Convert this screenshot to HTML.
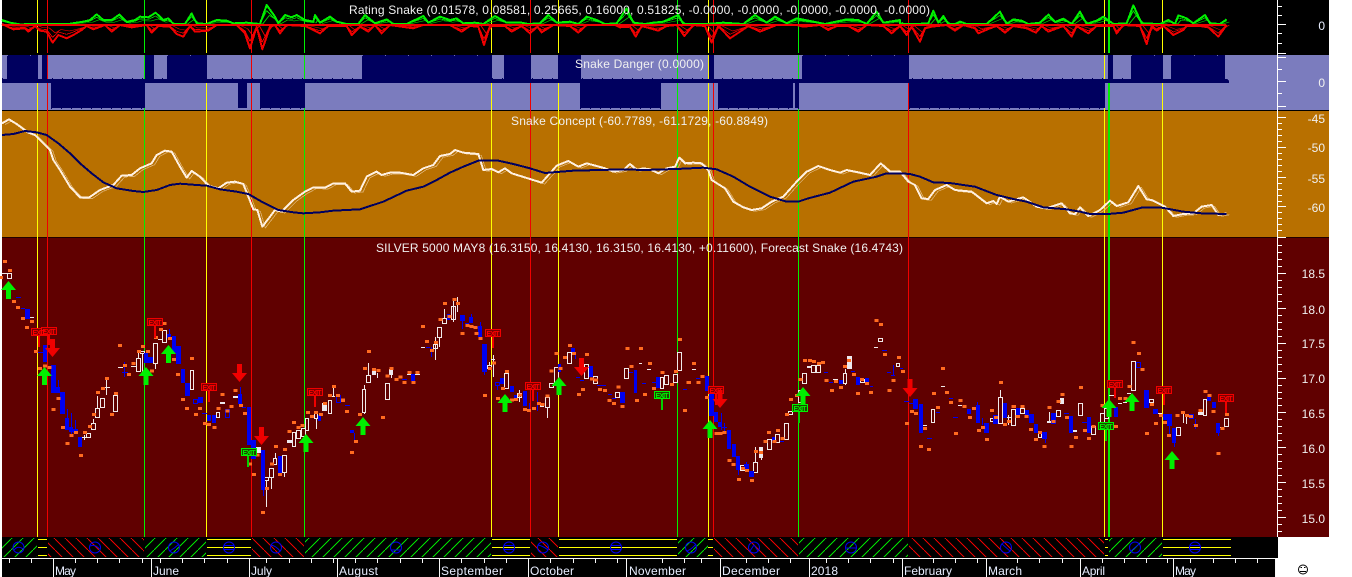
<!DOCTYPE html>
<html><head><meta charset="utf-8"><title>Silver chart</title>
<style>html,body{margin:0;padding:0;background:#fff;width:1352px;height:577px;overflow:hidden}svg{display:block}text{font-family:"Liberation Sans",Arial,sans-serif;font-size:12px}</style>
</head><body>
<svg width="1352" height="577" viewBox="0 0 1352 577" xmlns="http://www.w3.org/2000/svg">
<defs>
<pattern id="hg" patternUnits="userSpaceOnUse" width="11" height="11"><path d="M0 11L11 0" stroke="#00e000" fill="none" shape-rendering="crispEdges"/></pattern>
<pattern id="hr" patternUnits="userSpaceOnUse" width="11" height="11"><path d="M0 0L11 11" stroke="#e80000" fill="none" shape-rendering="crispEdges"/></pattern>
<path id="ga" d="M0 0L7.5 9H2.5V18H-2.5V9H-7.5Z" fill="#00f000"/>
<path id="ra" d="M0 0L-7.5 -9H-2.5V-18H2.5V-9H7.5Z" fill="#f00000"/>
<path id="gp" fill="none" stroke-linejoin="round" d="M6 60L30 68 60 73 110 72 160 72 205 72 250 65 270 60 290 43 310 60 335 60 358 44 380 66 405 60 420 50 445 52 467 38 490 60 505 55 520 72 555 72 575 40 590 70 620 72 650 60 680 62 700 70 740 68 780 72 800 15 825 50 835 70 855 45 875 52 890 45 915 60 940 65 945 45 960 68 990 50 1010 65 1040 72 1075 72 1095 45 1125 70 1160 58 1180 72 1220 72 1270 48 1285 68 1320 50 1350 60 1370 55 1390 70 1425 68 1450 72 1485 48 1520 68 1565 68 1585 72 1620 70 1645 45 1670 68 1710 65 1735 72 1760 50 1790 60 1815 72 1850 70 1880 25 1900 68 1935 72 1960 68 1990 65 2035 45 2050 72 2080 72 2120 72 2170 68 2230 72 2265 45 2300 68 2325 50 2360 70 2390 55 2440 65 2475 72 2540 58 2575 60 2600 72 2630 35 2650 68 2700 60 2700 72 2750 72 2785 70 2800 32 2815 68 2830 48 2845 72 2865 72 2880 65 2900 72 2960 72 3000 35 3020 72 3040 58 3065 62 3085 72 3120 68 3145 44 3165 66 3190 56 3215 72 3240 35 3260 72 3290 62 3310 50 3340 72 3380 70 3400 16 3425 70 3480 72 3505 60 3525 72 3535 46 3560 55 3580 70 3615 45 3630 70 3660 72 3680 58"/>
<path id="rp" fill="none" stroke-linejoin="round" d="M6 72L40 88 75 85 85 95 105 78 120 92 140 95 158 128 175 105 200 115 220 105 245 90 260 78 280 88 315 75 335 95 360 75 395 82 440 75 455 98 475 78 510 80 530 102 550 110 570 78 585 95 625 92 650 75 710 75 735 100 750 145 770 80 787 148 810 80 825 75 840 100 860 75 915 78 960 100 985 78 1040 78 1055 105 1080 80 1105 95 1125 75 1145 100 1170 75 1240 85 1270 75 1350 75 1385 95 1410 78 1435 80 1452 135 1470 78 1515 78 1535 95 1565 78 1590 100 1612 80 1625 97 1660 75 1710 78 1735 98 1760 75 1845 75 1860 82 1890 80 1907 110 1925 78 1975 92 2000 78 2030 75 2053 108 2080 75 2115 78 2135 128 2155 78 2190 115 2220 95 2245 78 2280 95 2330 75 2390 75 2410 80 2460 75 2485 90 2510 78 2545 78 2575 95 2600 75 2650 78 2675 100 2700 78 2720 105 2735 80 2760 125 2775 85 2795 80 2840 75 2865 92 2890 75 2925 85 2935 100 2970 85 2990 78 3015 98 3040 78 3080 85 3108 98 3125 78 3145 95 3190 78 3215 110 3230 78 3265 100 3290 78 3340 78 3350 100 3370 75 3420 78 3440 132 3455 78 3470 92 3490 78 3520 105 3550 90 3560 78 3600 78 3625 82 3655 110 3680 75"/>
<path id="wl" fill="none" stroke-linejoin="round" d="M6 370L27 358 50 372 85 398 105 405 125 425 150 450 160 480 180 510 210 560 240 592 268 592 300 570 340 555 365 527 395 525 420 505 455 490 470 465 495 452 515 455 540 500 560 533 575 513 600 530 625 557 655 565 680 548 705 545 730 552 745 590 760 628 772 630 787 680 810 650 825 630 845 635 880 600 915 575 940 562 975 563 1000 550 1035 550 1055 575 1080 572 1100 530 1130 515 1145 525 1170 518 1200 518 1240 525 1270 505 1300 495 1320 468 1350 462 1365 450 1390 458 1435 462 1450 510 1475 507 1495 517 1515 505 1535 520 1590 537 1625 548 1650 520 1670 497 1705 483 1735 500 1760 490 1790 498 1815 505 1840 515 1870 510 1890 492 1910 510 1930 505 1950 508 1975 520 2000 505 2025 500 2038 473 2055 490 2080 488 2105 490 2125 510 2135 540 2175 565 2200 605 2230 622 2255 630 2285 625 2315 605 2350 590 2390 545 2420 515 2455 498 2490 510 2520 518 2540 510 2575 517 2610 525 2642 490 2670 515 2700 515 2725 545 2745 555 2765 595 2785 597 2805 570 2840 555 2865 570 2915 575 2960 610 2980 603 2990 612 3000 590 3025 605 3070 592 3110 620 3140 625 3185 610 3210 640 3225 642 3240 622 3265 648 3300 630 3330 602 3350 618 3385 607 3415 558 3440 598 3455 600 3495 620 3520 648 3550 642 3580 640 3605 620 3635 615 3655 645 3680 640"/>
</defs>

<!-- panel backgrounds -->
<rect x="2" y="0" width="1327" height="55" fill="#000"/>
<rect x="2" y="55" width="1327" height="55" fill="#7b7cbe"/>
<rect x="2" y="111" width="1327" height="126" fill="#b87000"/>
<rect x="2" y="238" width="1327" height="299" fill="#600000"/>
<rect x="2" y="110" width="1327" height="1" fill="#000"/>
<rect x="2" y="237" width="1327" height="1" fill="#200000"/>

<!-- vertical signal lines -->
<g shape-rendering="crispEdges" stroke-width="1">
<path stroke="#ffff00" d="M37.5 0V537M206.5 0V537M491.5 0V537M558.5 0V537M708.5 0V537M1104.5 0V537M1162.5 0V537"/>
<path stroke="#f00000" d="M47.5 0V537M251.5 0V537M530.5 0V537M713.5 0V537M908.5 0V537"/>
<path stroke="#00f000" d="M144.5 0V537M304.5 0V537M677.5 0V537M798.5 0V537"/>
<path stroke="#00f000" stroke-width="1" d="M1108.5 0V537M1109.5 0V537"/>
</g>
<rect x="2" y="53" width="1276" height="2" fill="#000"/>

<!-- rating snake -->
<g shape-rendering="crispEdges">
<g transform="scale(.33333)" stroke-width="3.2">
<use href="#gp" stroke="#00e000" transform="translate(0 72) scale(1 .7) translate(0 -72)"/>
<use href="#gp" stroke="#00e000" transform="translate(8 72) scale(1 .45) translate(0 -72)"/>
<use href="#rp" stroke="#f00000" transform="translate(0 75) scale(1 .7) translate(0 -75)"/>
<use href="#rp" stroke="#f00000" transform="translate(8 75) scale(1 .45) translate(0 -75)"/>
</g>
<g transform="scale(.33333)" stroke-width="6">
<use href="#gp" stroke="#00f000"/>
<use href="#rp" stroke="#f00000"/>
</g>
<rect x="2" y="24" width="1224" height="2" fill="#f00000"/>
</g>

<!-- snake danger -->
<g fill="#00005f" shape-rendering="crispEdges">
<path d="M2 79H1227L1229 81V83H2Z"/>
<path d="M7 55H38V79H7ZM42 55H47V79H42ZM145 55H154V79H145ZM167 55H207V79H167ZM362 55H492V79H362ZM504 55H531V79H504ZM558 55H581V79H558ZM709 55H714V79H709ZM802 55H909V79H802ZM1108 55H1113V79H1108ZM1131 55H1163V79H1131ZM1171 55H1225V79H1171Z"/>
<path d="M51 83H145V108H51ZM238 83H247V108H238ZM260 83H305V108H260ZM580 83H661V108H580ZM718 83H793V108H718ZM795 83H799V108H795ZM909 83H1105V108H909Z"/>
</g>
<g shape-rendering="crispEdges" fill="none">
<path stroke="#00005f" stroke-dasharray="1 9" d="M2 78.5H1229"/>
<path stroke="#00005f" stroke-dasharray="1 9" d="M51 108.5H145M260 108.5H305M580 108.5H661M718 108.5H799M909 108.5H1105"/>
<path stroke="#7b7cbe" stroke-dasharray="1 22" d="M7 55.5H38M167 55.5H207M362 55.5H492M802 55.5H909M1131 55.5H1163M1171 55.5H1225" opacity=".9"/>
</g>

<!-- snake concept -->
<g shape-rendering="crispEdges">
<g transform="scale(.33333)">
<use href="#wl" stroke="#dcb070" stroke-width="2.5" transform="translate(9 4)"/>
<use href="#wl" stroke="#fff0e0" stroke-width="6"/>
<path fill="none" stroke="#00005f" stroke-width="6" stroke-linejoin="round" d="M6 405L40 402 75 393 110 397 140 405 175 430 210 460 240 490 275 520 310 547 350 565 400 573 430 576 470 570 510 555 540 551 590 555 620 557 660 568 710 575 745 582 785 605 835 630 880 637 910 640 960 637 1000 632 1080 628 1150 605 1220 572 1270 560 1310 540 1350 518 1390 500 1435 482 1495 482 1540 492 1590 505 1635 519 1720 512 1800 510 1870 508 1930 510 2030 507 2110 503 2150 508 2200 530 2250 560 2310 590 2360 605 2395 605 2425 595 2490 578 2560 545 2630 530 2660 520 2700 520 2730 522 2760 530 2800 547 2850 549 2890 555 2925 560 2990 585 3040 597 3080 605 3130 622 3200 628 3240 635 3270 642 3325 642 3370 638 3425 623 3485 623 3550 635 3605 640 3680 642"/>
</g>
</g>

<!-- candles: hollow white -->
<path fill="#600000" stroke="#f0eaea" shape-rendering="crispEdges" d="M7.5 273.5h4v5h-4zM86.5 433.5h4v4h-4zM91.5 423.5h4v6h-4zM95.5 408.5h4v9h-4zM100.5 398.5h4v9h-4zM113.5 395.5h4v16h-4zM136.5 358.5h4v13h-4zM140.5 351.5h4v2h-4zM153.5 343.5h4v20h-4zM162.5 330.5h4v12h-4zM190.5 370.5h3v19h-3zM216.5 412.5h3v5h-3zM264.5 477.5h4v3h-4zM269.5 468.5h4v9h-4zM273.5 458.5h3v6h-3zM282.5 455.5h4v17h-4zM292.5 432.5h3v14h-3zM296.5 430.5h4v8h-4zM301.5 428.5h4v8h-4zM305.5 418.5h3v12h-3zM314.5 413.5h3v5h-3zM328.5 400.5h3v13h-3zM362.5 389.5h3v23h-3zM366.5 375.5h4v7h-4zM385.5 383.5h4v16h-4zM433.5 344.5h4v4h-4zM437.5 327.5h4v10h-4zM442.5 318.5h4v5h-4zM451.5 306.5h4v13h-4zM487.5 365.5h4v3h-4zM504.5 373.5h4v15h-4zM517.5 393.5h4v4h-4zM545.5 397.5h4v10h-4zM549.5 383.5h4v4h-4zM554.5 367.5h4v16h-4zM567.5 352.5h4v11h-4zM584.5 364.5h4v14h-4zM593.5 376.5h4v7h-4zM615.5 392.5h4v5h-4zM624.5 368.5h4v10h-4zM660.5 377.5h3v11h-3zM664.5 375.5h4v9h-4zM673.5 374.5h4v8h-4zM677.5 352.5h4v18h-4zM740.5 465.5h4v5h-4zM753.5 462.5h4v10h-4zM767.5 439.5h4v10h-4zM775.5 434.5h4v8h-4zM784.5 423.5h4v16h-4zM788.5 411.5h4v3h-4zM798.5 390.5h3v12h-3zM802.5 373.5h4v10h-4zM811.5 365.5h4v7h-4zM816.5 365.5h4v7h-4zM843.5 373.5h3v10h-3zM860.5 379.5h4v3h-4zM878.5 338.5h4v3h-4zM896.5 363.5h3v3h-3zM931.5 409.5h3v13h-3zM990.5 418.5h3v3h-3zM998.5 397.5h4v26h-4zM1011.5 409.5h4v16h-4zM1020.5 408.5h4v5h-4zM1038.5 431.5h3v6h-3zM1056.5 410.5h4v6h-4zM1078.5 403.5h4v12h-4zM1091.5 426.5h4v8h-4zM1100.5 413.5h4v10h-4zM1104.5 408.5h4v10h-4zM1131.5 361.5h4v29h-4zM1149.5 399.5h4v3h-4zM1176.5 427.5h4v8h-4zM1203.5 399.5h3v16h-3zM1224.5 418.5h4v8h-4z"/>
<!-- white wicks and dashes -->
<path fill="none" stroke="#f0eaea" shape-rendering="crispEdges" d="M106.5 377V395M104 387.5H110M97.5 396V408M93.5 419V423M84.5 435V440M114.5 393V395M138.5 350V358M142.5 353V372M155.5 363V369M316.5 418V429M333.5 388V396M331 396.5H335M266.5 480V507M271.5 477V489M275.5 453V458M284.5 472V477M364.5 385V389M364.5 412V414M368.5 363V375M377.5 373V378M391.5 375V378M435.5 337V360M439.5 337V347M444.5 309V318M453.5 298V322M457.5 297V312M489.5 362V365M493.5 355V377M491 359.5H495M547.5 407V418M519.5 390V402M755.5 447V462M761.5 458V460M845.5 369V373M845.5 383V385M1000.5 390V397M1008.5 415V425M1005 417.5H1011M1049.5 412V422M1183.5 413V423M1186.5 415V424M2 273.5H7M30 317.5H34M82 437.5H86M118 367.5H123M131 366.5H136M158 339.5H162M421 347.5H425M407 374.5H411M415 374.5H420M639 363.5H642M647 369.5H651M692 369.5H696M833 379.5H838M874 347.5H878M923 425.5H927M941 386.5H945M958 405.5H962M1109 395.5H1114M1118 403.5H1122M1123 402.5H1127M1127 393.5H1131M1158 413.5H1162M1220 427.5H1224"/>
<!-- solid white -->
<path fill="#ece8ee" shape-rendering="crispEdges" d="M220 402h5v2h-5zM233 396h5v2h-5zM256 447h5v6h-5zM287 440h5v3h-5zM322 403h5v8h-5zM372 371h4v4h-4zM389 369h4v6h-4zM540 403h4v4h-4zM759 447h4v11h-4zM807 366h4v2h-4zM847 356h5v13h-5zM1060 398h4v6h-4zM1198 412h5v3h-5zM1047 421h4v2h-4zM1073 430h4v2h-4z"/>
<!-- blue candles -->
<path fill="#0000f0" shape-rendering="crispEdges" d="M25 309h5v10h-5zM43 345h4v17h-4zM51 365h5v28h-5zM56 387h4v6h-4zM60 392h5v22h-5zM65 418h4v12h-4zM69 427h4v5h-4zM73 429h5v4h-5zM78 437h4v10h-4zM144 353h4v10h-4zM148 357h5v6h-5zM167 334h4v4h-4zM172 336h4v17h-4zM176 346h5v18h-5zM181 369h4v14h-4zM185 383h5v13h-5zM198 397h5v6h-5zM207 415h4v6h-4zM212 415h4v8h-4zM238 394h4v10h-4zM247 407h4v38h-4zM251 440h5v19h-5zM261 450h4v40h-4zM278 456h4v17h-4zM318 415h3v6h-3zM350 430h4v3h-4zM411 374h4v7h-4zM447 314h3v6h-3zM460 315h5v6h-5zM469 317h4v6h-4zM478 326h4v11h-4zM482 344h5v28h-5zM500 378h4v6h-4zM510 386h4v6h-4zM514 395h3v3h-3zM523 391h4v15h-4zM571 348h4v4h-4zM558 364h3v8h-3zM589 366h4v11h-4zM620 392h5v11h-5zM634 370h3v23h-3zM656 377h4v11h-4zM705 376h4v15h-4zM709 391h5v25h-5zM714 412h4v10h-4zM718 422h4v5h-4zM727 430h4v19h-4zM732 444h4v13h-4zM736 456h4v14h-4zM744 464h5v5h-5zM749 471h5v6h-5zM772 437h3v4h-3zM839 380h4v4h-4zM856 377h4v8h-4zM865 378h4v5h-4zM913 399h5v10h-5zM919 404h4v29h-4zM967 409h4v5h-4zM976 405h4v18h-4zM984 423h5v10h-5zM993 415h5v9h-5zM1003 403h4v15h-4zM1016 408h4v9h-4zM1025 410h4v6h-4zM1029 414h5v9h-5zM1034 424h4v9h-4zM1042 432h5v7h-5zM1051 413h5v11h-5zM1069 416h4v17h-4zM1087 417h4v16h-4zM1114 407h4v10h-4zM1144 390h5v18h-5zM1153 409h5v5h-5zM1163 414h4v6h-4zM1167 414h5v12h-5zM1172 428h4v15h-4zM1189 414h5v5h-5zM1207 397h4v4h-4zM1212 402h4v6h-4zM1216 423h4v10h-4z"/>
<!-- blue hollow, wicks, dashes -->
<path fill="none" stroke="#0000f0" shape-rendering="crispEdges" d="M193.5 399.5h4v4h-4zM225.5 409.5h4v8h-4zM336.5 395.5h4v7h-4zM495.5 382.5h4v3h-4zM1136.5 362.5h4v5h-4zM67.5 409V418M71.5 413V435M75.5 420V429M58.5 380V387M124.5 362V377M122 372.5H128M169.5 329V334M240.5 387V394M263.5 490V496M354.5 433V442M431.5 347V357M462.5 321V329M471.5 314V317M480.5 322V326M484.5 372V375M497.5 385V390M537.5 392V411M529.5 403V410M575.5 352V359M721.5 413V430M738.5 470V475M746.5 462V464M724.5 423V433M722 427.5H727M893.5 365V375M977.5 402V405M982.5 418V425M1045.5 439V443M1169.5 426V435M1174.5 443V447M1195.5 419V429M1193 424.5H1197M1218.5 433V436M16 297.5H21M21 308.5H25M37 352.5H43M202 413.5H207M242 407.5H246M341 399.5H345M345 405.5H350M402 379.5H407M426 347.5H430M465 323.5H469M473 327.5H478M576 377.5H580M580 380.5H584M597 385.5H602M602 385.5H606M608 394.5H612M612 398.5H616M629 372.5H633M642 383.5H646M652 382.5H656M683 389.5H687M696 378.5H700M780 441.5H784M824 372.5H828M829 382.5H833M851 371.5H855M870 386.5H873M882 350.5H887M887 372.5H891M891 375.5H895M900 368.5H903M904 401.5H909M909 403.5H913M936 412.5H940M949 398.5H953M953 417.5H958M927 438.5H932M1064 413.5H1069M1082 422.5H1087"/>

<!-- orange forecast dots -->
<g stroke="#ff6a20" stroke-width="9" fill="none" shape-rendering="crispEdges">
<path transform="translate(-2 240) scale(.33333)" d="M15 65h12M30 92h12M3 113h12M42 184h12M54 202h12M69 235h12M96 244h12M81 262h12M108 335h12M120 385h12M135 378h12M148 382h12M176 475h12M161 508h12M189 562h12M214 586h12M202 610h12M228 578h12M243 647h12M255 578h12M270 560h12M282 523h12M294 458h12M309 445h12M321 415h12M336 523h12M348 460h12M360 316h12M375 376h12M387 403h12M401 370h12M417 334h12M429 320h12M444 335h12M456 393h12M468 292h12M483 268h12M494 250h12M510 295h12M522 358h12M534 403h12M549 478h12M576 355h12M561 505h12M588 523h12M600 505h12M615 550h12M627 553h12M644 562h12M656 505h12M668 463h12M683 513h12M695 500h12M707 451h12M723 497h12M735 520h12M750 672h12M762 703h12M773 645h12M789 817h12M801 745h12M816 672h12M828 620h12M840 703h12M855 628h12M868 574h12M882 547h12M896 563h12M908 556h12M924 518h12M936 530h12M948 517h12M963 524h12M975 490h12M990 466h12M1002 439h12M1014 466h12M1029 480h12M1041 515h12"/>
<path transform="translate(338 240) scale(.33333)" d="M87 334h12M75 385h12M102 388h12M115 391h12M143 408h12M155 385h12M170 418h12M182 411h12M194 427h12M209 397h12M221 427h12M233 397h12M129 532h12M60 523h12M48 604h12M36 637h12M21 514h12M9 481h12M249 259h12M261 304h12M276 331h12M288 307h12M301 238h12M315 190h12M328 229h12M343 178h12M354 190h12M368 280h12M382 256h12M394 259h12M406 262h12M409 280h12M422 295h12M435 466h12M450 385h12M462 369h12M474 476h12M489 446h12M501 394h12M516 480h12M528 478h12M540 465h12M555 508h12M567 511h12M582 505h12M597 490h12M607 493h12M622 468h12M635 393h12M650 340h12M662 385h12M675 352h12M690 316h12M702 340h12M717 463h12M729 448h12M741 343h12M756 417h12M768 420h12M780 448h12M795 451h12M808 481h12M822 490h12M835 441h12M847 499h12M862 325h12M875 379h12M891 481h12M903 325h12M915 463h12M930 370h12M942 445h12M968 397h12M996 433h12M1008 394h12M1020 298h12M1035 511h12M1045 427h12"/>
<path transform="translate(678 240) scale(.33333)" d="M15 511h12M27 427h12M42 370h12M55 427h12M67 409h12M81 472h12M110 580h12M122 580h12M134 577h12M149 661h12M161 673h12M177 718h12M189 686h12M201 691h12M216 721h12M228 635h12M243 637h12M256 604h12M267 577h12M283 604h12M294 571h12M307 595h12M321 523h12M333 478h12M351 466h12M362 418h12M375 361h12M390 361h12M402 364h12M417 370h12M429 367h12M440 421h12M456 451h12M468 424h12M483 442h12M495 379h12M507 361h12M522 403h12M534 460h12M546 418h12M561 430h12M573 457h12M589 241h12M603 253h12M615 344h12M629 451h12M641 421h12M657 352h12M669 394h12M681 550h12M696 515h12M708 520h12M723 619h12M735 565h12M747 628h12M762 460h12M774 502h12M789 385h12M801 457h12M813 487h12M828 580h12M842 481h12M854 499h12M870 532h12M882 505h12M897 571h12M909 562h12M921 598h12M936 511h12M948 532h12M963 427h12M975 553h12M987 544h12M1002 499h12M1014 529h12"/>
<path transform="translate(1010 240) scale(.33333)" d="M5 500h12M17 530h12M32 500h12M44 530h12M57 568h12M72 598h12M84 577h12M98 619h12M113 502h12M125 544h12M140 484h12M152 463h12M165 532h12M179 619h12M192 592h12M207 442h12M219 571h12M231 595h12M245 559h12M272 496h12M312 559h12M324 475h12M340 475h12M353 439h12M365 307h12M381 340h12M392 388h12M405 580h12M420 493h12M432 550h12M447 526h12M459 547h12M471 586h12M497 526h12M513 517h12M525 526h12M537 529h12M552 556h12M565 511h12M580 454h12M593 466h12M605 514h12M620 640h12M632 565h12M645 523h12"/>
</g>

<!-- exit signs: stems -->
<g shape-rendering="crispEdges">
<path fill="none" stroke="#f00000" stroke-width="2" d="M39 336V347M49 334V345M155 326V338M209 390V402M315 395V407M493 336V348M533 389V401M716 393V405M1115 387V398M1164 393V405M1226 401V413"/>
<path fill="none" stroke="#00d000" stroke-width="2" d="M248 455V467M662 398V410M799 411V423M1106 429V441"/>
<g fill="#7a0000" stroke="#f00000">
<rect x="31.5" y="328.5" width="15" height="7"/><rect x="41.5" y="327.5" width="15" height="7"/><rect x="147.5" y="318.5" width="15" height="7"/><rect x="201.5" y="383.5" width="15" height="7"/><rect x="307.5" y="388.5" width="15" height="7"/><rect x="485.5" y="329.5" width="15" height="7"/><rect x="525.5" y="382.5" width="15" height="7"/><rect x="708.5" y="386.5" width="15" height="7"/><rect x="1107.5" y="380.5" width="15" height="7"/><rect x="1156.5" y="386.5" width="15" height="7"/><rect x="1218.5" y="394.5" width="15" height="7"/>
</g>
<g fill="#204000" stroke="#00f000">
<rect x="241.5" y="448.5" width="15" height="7"/><rect x="654.5" y="391.5" width="15" height="7"/><rect x="792.5" y="404.5" width="15" height="7"/><rect x="1098.5" y="422.5" width="15" height="7"/>
</g>
</g>
<g text-anchor="middle" fill="#ff0000">
<text x="39" y="335" textLength="13" style="font-size:7px;font-weight:700">EXIT</text>
<text x="49" y="334" textLength="13" style="font-size:7px;font-weight:700">EXIT</text>
<text x="155" y="325" textLength="13" style="font-size:7px;font-weight:700">EXIT</text>
<text x="209" y="390" textLength="13" style="font-size:7px;font-weight:700">EXIT</text>
<text x="315" y="395" textLength="13" style="font-size:7px;font-weight:700">EXIT</text>
<text x="493" y="336" textLength="13" style="font-size:7px;font-weight:700">EXIT</text>
<text x="533" y="389" textLength="13" style="font-size:7px;font-weight:700">EXIT</text>
<text x="716" y="393" textLength="13" style="font-size:7px;font-weight:700">EXIT</text>
<text x="1115" y="387" textLength="13" style="font-size:7px;font-weight:700">EXIT</text>
<text x="1164" y="393" textLength="13" style="font-size:7px;font-weight:700">EXIT</text>
<text x="1226" y="401" textLength="13" style="font-size:7px;font-weight:700">EXIT</text>
</g>
<g text-anchor="middle" fill="#00f000">
<text x="249" y="455" textLength="13" style="font-size:7px;font-weight:700">EXIT</text>
<text x="662" y="398" textLength="13" style="font-size:7px;font-weight:700">EXIT</text>
<text x="800" y="411" textLength="13" style="font-size:7px;font-weight:700">EXIT</text>
<text x="1106" y="429" textLength="13" style="font-size:7px;font-weight:700">EXIT</text>
</g>

<!-- arrows -->
<use href="#ga" x="8.5" y="281"/><use href="#ga" x="44.5" y="367"/><use href="#ga" x="146" y="367"/><use href="#ga" x="168.5" y="345"/><use href="#ga" x="306" y="434"/><use href="#ga" x="363" y="417"/><use href="#ga" x="505" y="394"/><use href="#ga" x="559" y="377"/><use href="#ga" x="710" y="420"/><use href="#ga" x="803" y="387"/><use href="#ga" x="1109" y="399"/><use href="#ga" x="1132" y="393"/><use href="#ga" x="1172" y="451"/>
<use href="#ra" x="52.5" y="357"/><use href="#ra" x="239.5" y="382"/><use href="#ra" x="261.5" y="445"/><use href="#ra" x="581.5" y="376"/><use href="#ra" x="720" y="408"/><use href="#ra" x="910" y="397"/>

<!-- bottom sentiment strip -->
<rect x="2" y="537" width="1276" height="21" fill="#000"/>
<g shape-rendering="crispEdges">
<rect x="2" y="538" width="35" height="19" fill="url(#hg)"/>
<rect x="48" y="538" width="96" height="19" fill="url(#hr)"/>
<rect x="145" y="538" width="61" height="19" fill="url(#hg)"/>
<rect x="252" y="538" width="52" height="19" fill="url(#hr)"/>
<rect x="305" y="538" width="186" height="19" fill="url(#hg)"/>
<rect x="531" y="538" width="27" height="19" fill="url(#hr)"/>
<rect x="678" y="538" width="30" height="19" fill="url(#hg)"/>
<rect x="714" y="538" width="84" height="19" fill="url(#hr)"/>
<rect x="799" y="538" width="109" height="19" fill="url(#hg)"/>
<rect x="909" y="538" width="195" height="19" fill="url(#hr)"/>
<rect x="1109" y="538" width="53" height="19" fill="url(#hg)"/>
<path fill="none" stroke="#ffff00" d="M38 539.5H47M38 547.5H47M38 555.5H47M207 539.5H251M207 547.5H251M207 555.5H251M492 539.5H530M492 547.5H530M492 555.5H530M559 539.5H677M559 547.5H677M559 555.5H677M708 539.5H713M708 547.5H713M708 555.5H713M1105 539.5H1108M1105 547.5H1108M1105 555.5H1108M1163 539.5H1231M1163 547.5H1231M1163 555.5H1231"/>
</g>
<g fill="none" stroke="#0000f0">
<circle cx="18.5" cy="547.5" r="5.5"/><path d="M14 550Q18 545 23 549"/>
<circle cx="95" cy="547.5" r="5.5"/><path d="M90.500 546Q95 544 99.500 549"/>
<circle cx="174" cy="547.5" r="5.5"/><path d="M170 551Q175 548 179 544"/>
<circle cx="229" cy="547.5" r="5.5"/><path d="M224 545.500H234M224 549.500H234"/>
<circle cx="276" cy="547.5" r="5.5"/><path d="M271 545Q276 546 280 551"/>
<circle cx="396" cy="547.5" r="5.5"/><path d="M391 550H401"/>
<circle cx="509" cy="547.5" r="5.5"/><path d="M504 545.500H514M504 549.500H514"/>
<circle cx="543" cy="547.5" r="5.5"/><path d="M538 545Q543 546 548 550"/>
<circle cx="616" cy="547.5" r="5.5"/><path d="M611 545.500H621M611 549.500H621"/>
<circle cx="691" cy="547.5" r="5.5"/><path d="M687 551Q692 549 696 544"/>
<circle cx="754" cy="547.5" r="5.5"/><path d="M750 551L754 545 758 551"/>
<circle cx="851" cy="547.5" r="5.5"/><path d="M846 548H856"/>
<circle cx="1006" cy="547.5" r="5.5"/><path d="M1002 544L1010 551"/>
<circle cx="1135" cy="547.5" r="5.5"/><path d="M1131 551L1139 544"/>
<circle cx="1195" cy="547.5" r="5.5"/><path d="M1190 545.500H1200M1190 549.500H1200"/>
</g>

<!-- time axis -->
<rect x="2" y="558" width="1274" height="19" fill="#000"/>
<g fill="none" stroke="#f8f8f8" shape-rendering="crispEdges">
<path d="M2 558.500H1276"/>
<path d="M9.500 559V563M31.500 559V563M75.500 559V563M97.500 559V563M119.500 559V563M142.500 559V563M160.500 559V563M182.500 559V563M204.500 559V563M227.500 559V563M266.500 559V563M289.500 559V563M311.500 559V563M333.500 559V563M355.500 559V563M377.500 559V563M400.500 559V563M422.500 559V563M461.500 559V563M484.500 559V563M506.500 559V563M550.500 559V563M573.500 559V563M595.500 559V563M617.500 559V563M662.500 559V563M684.500 559V563M701.500 559V563M746.500 559V563M768.500 559V563M790.500 559V563M826.500 559V563M848.500 559V563M870.500 559V563M893.500 559V563M933.500 559V563M955.500 559V563M977.500 559V563M1017.500 559V563M1039.500 559V563M1062.500 559V563M1102.500 559V563M1124.500 559V563M1146.500 559V563M1167.500 559V563M1190.500 559V563M1213.500 559V563M1235.500 559V563M1257.500 559V563"/>
<path d="M53.500 559V577M151.500 559V577M249.500 559V577M337.500 559V577M439.500 559V577M528.500 559V577M626.500 559V577M720.500 559V577M809.500 559V577M902.500 559V577M986.500 559V577M1080.500 559V577M1173.500 559V577M1275.500 559V577"/>
</g>
<g fill="#e8eeff">
<text x="55" y="575" textLength="21">May</text>
<text x="153" y="575" textLength="26">June</text>
<text x="251" y="575" textLength="21">July</text>
<text x="339" y="575" textLength="39">August</text>
<text x="441" y="575" textLength="62">September</text>
<text x="530" y="575" textLength="44">October</text>
<text x="629" y="575" textLength="57">November</text>
<text x="722" y="575" textLength="58">December</text>
<text x="811" y="575" textLength="27">2018</text>
<text x="904" y="575" textLength="48">February</text>
<text x="988" y="575" textLength="34">March</text>
<text x="1082" y="575" textLength="23">April</text>
<text x="1175" y="575" textLength="21">May</text>
</g>

<!-- right axis -->
<g stroke="#fff" fill="none" shape-rendering="crispEdges">
<path d="M1277.500 0V537"/>
<path d="M1278 6.500H1282M1278 15.500H1282M1278 24.500H1286M1278 33.500H1282M1278 43.500H1282M1278 53.500H1286M1278 57.500H1286M1278 69.500H1282M1278 81.500H1286M1278 93.500H1282M1278 106.500H1286"/>
<path d="M1278 117.500H1286M1278 123.500H1282M1278 129.500H1282M1278 135.500H1282M1278 141.500H1282M1278 147.500H1286M1278 153.500H1282M1278 159.500H1282M1278 165.500H1282M1278 171.500H1282M1278 177.500H1286M1278 183.500H1282M1278 189.500H1282M1278 195.500H1282M1278 201.500H1282M1278 206.500H1286M1278 212.500H1282M1278 218.500H1282M1278 224.500H1282M1278 230.500H1282M1278 237.500H1286"/>
<path d="M1278 245.500H1282M1278 252.500H1282M1278 259.500H1282M1278 266.500H1282M1278 273.500H1286M1278 280.500H1282M1278 287.500H1282M1278 294.500H1282M1278 301.500H1282M1278 308.500H1286M1278 315.500H1282M1278 322.500H1282M1278 329.500H1282M1278 336.500H1282M1278 343.500H1286M1278 350.500H1282M1278 357.500H1282M1278 364.500H1282M1278 371.500H1282M1278 378.500H1286M1278 385.500H1282M1278 392.500H1282M1278 398.500H1282M1278 405.500H1282M1278 412.500H1286M1278 419.500H1282M1278 426.500H1282M1278 433.500H1282M1278 440.500H1282M1278 447.500H1286M1278 454.500H1282M1278 461.500H1282M1278 468.500H1282M1278 475.500H1282M1278 482.500H1286M1278 489.500H1282M1278 496.500H1282M1278 503.500H1282M1278 510.500H1282M1278 517.500H1286M1278 524.500H1282M1278 531.500H1282"/>
</g>
<g text-anchor="end" fill="#f0f0f0">
<text x="1325" y="30" fill="#e8eeff">0</text>
<text x="1325" y="87">0</text>
<text x="1325" y="123">-45</text>
<text x="1325" y="152">-50</text>
<text x="1325" y="183">-55</text>
<text x="1325" y="212">-60</text>
<text x="1325" y="278">18.5</text>
<text x="1325" y="314">18.0</text>
<text x="1325" y="348">17.5</text>
<text x="1325" y="383">17.0</text>
<text x="1325" y="418">16.5</text>
<text x="1325" y="453">16.0</text>
<text x="1325" y="488">15.5</text>
<text x="1325" y="523">15.0</text>
</g>

<!-- titles -->
<g fill="#f0f0f0">
<text x="349" y="14" textLength="581">Rating Snake (0.01578, 0.08581, 0.25665, 0.16000, 0.51825, -0.0000, -0.0000, -0.0000, -0.0000, -0.0000)</text>
<text x="575" y="68" textLength="129">Snake Danger (0.0000)</text>
<text x="511" y="125" textLength="257">Snake Concept (-60.7789, -61.1729, -60.8849)</text>
<text x="376" y="252" textLength="527">SILVER 5000 MAY8 (16.3150, 16.4130, 16.3150, 16.4130, +0.11600), Forecast Snake (16.4743)</text>
</g>

<!-- smiley -->
<g fill="none" stroke="#000">
<ellipse cx="1303" cy="569.500" rx="4.500" ry="4.500"/>
<path d="M1300 571.500H1306"/>
<path d="M1300.500 567.500H1302M1304 567.500H1305.500"/>
</g>
</svg>
</body></html>
